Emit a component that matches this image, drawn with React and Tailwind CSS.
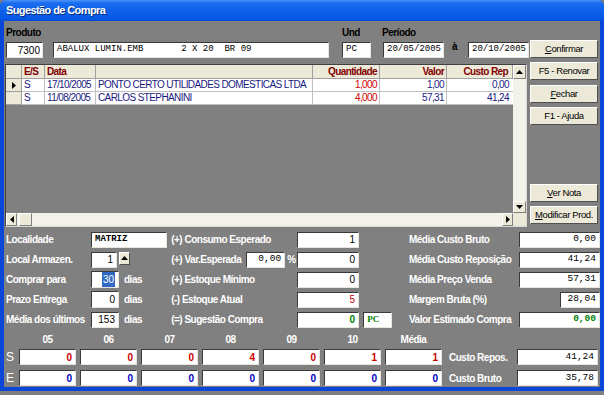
import React from 'react'

const sans = "font-['Liberation_Sans',Arial,sans-serif]"
const mono = "font-['Liberation_Mono','Courier_New',monospace]"

const Box = ({ className = '', children }) => (
  <div className={`bg-white border border-t-[#3a3a3a] border-l-[#3a3a3a] border-b-[#e8e6dc] border-r-[#e8e6dc] flex items-center overflow-hidden whitespace-nowrap ${className}`}>
    {children}
  </div>
)

const Btn = ({ children, className = '' }) => (
  <div className={`h-[18px] w-[68px] bg-[#ece9d8] border border-t-white border-l-white border-b-[#505050] border-r-[#505050] flex items-center justify-center text-[9.5px] tracking-[-0.4px] text-black whitespace-nowrap ${sans} ${className}`}>
    {children}
  </div>
)

const Tri = ({ dir }) => {
  const pts = { up: '0,4 3.5,0 7,4', down: '0,0 3.5,4 7,0', left: '4,0 0,3.5 4,7', right: '0,0 4,3.5 0,7' }[dir]
  const w = dir === 'up' || dir === 'down' ? 7 : 4
  const h = dir === 'up' || dir === 'down' ? 4 : 7
  return (
    <svg width={w} height={h} viewBox={`0 0 ${w} ${h}`}>
      <polygon points={pts} fill="#000" />
    </svg>
  )
}

const rows = [
  { es: 'S', data: '17/10/2005', nome: 'PONTO CERTO UTILIDADES DOMESTICAS LTDA', qt: '1,000', valor: '1,00', custo: '0,00', sel: true },
  { es: 'S', data: '11/08/2005', nome: 'CARLOS STEPHANINI', qt: '4,000', valor: '57,31', custo: '41,24' },
]

const Label = ({ children, className = '' }) => (
  <div className={`text-[10px] tracking-[-0.5px] font-bold text-white whitespace-nowrap ${sans} ${className}`}>{children}</div>
)

const hd = 'bg-[#ece9d8] border-r border-b border-t-white border-l-white border-r-[#a0a0a0] border-b-[#a0a0a0] leading-[13px]'
const cell = 'bg-white border-r border-b border-[#c0c0c0]'

const Grid = () => (
  <div className="w-[522px] h-[163px] border border-t-[#404040] border-l-[#404040] border-b-[#d8d8d8] border-r-[#d8d8d8] flex flex-col">
    <div className="flex flex-1 min-h-0">
      <div className="w-[507px] flex flex-col">
        <div className={`h-[14px] flex text-[10px] tracking-[-0.6px] font-bold text-[#800000] ${sans}`}>
          <div className={`w-[16px] ${hd}`}></div>
          <div className={`w-[23px] pl-[2px] ${hd}`}>E/S</div>
          <div className={`w-[51px] pl-[2px] ${hd}`}>Data</div>
          <div className={`w-[217px] ${hd}`}></div>
          <div className={`w-[67px] pr-[2px] text-right ${hd}`}>Quantidade</div>
          <div className={`w-[67px] pr-[2px] text-right ${hd}`}>Valor</div>
          <div className={`w-[66px] pr-[4px] text-right ${hd}`}>Custo Rep</div>
        </div>
        {rows.map((r, i) => (
          <div key={i} className={`h-[13px] flex text-[10px] tracking-[-0.6px] text-[#1a1a80] leading-[12px] ${sans}`}>
            <div className="w-[16px] bg-[#ece9d8] border-r border-b border-[#a0a0a0] flex items-center justify-center">
              {r.sel && <Tri dir="right" />}
            </div>
            <div className={`w-[23px] pl-[2px] ${cell}`}>{r.es}</div>
            <div className={`w-[51px] pl-[2px] ${cell}`}>{r.data}</div>
            <div className={`w-[217px] pl-[2px] whitespace-nowrap overflow-hidden ${cell}`}>{r.nome}</div>
            <div className={`w-[67px] pr-[2px] text-right text-[#d00000] ${cell}`}>{r.qt}</div>
            <div className={`w-[67px] pr-[2px] text-right ${cell}`}>{r.valor}</div>
            <div className="w-[66px] bg-white border-b border-[#c0c0c0] pr-[4px] text-right">{r.custo}</div>
          </div>
        ))}
      </div>
      <div className="w-[13px] bg-[#f3f2ea] flex flex-col justify-between">
        <div className="h-[14px] bg-[#ece9d8] border border-t-white border-l-white border-b-[#808080] border-r-[#808080] flex items-center justify-center">
          <Tri dir="up" />
        </div>
        <div className="h-[12px] bg-[#ece9d8] border border-t-white border-l-white border-b-[#808080] border-r-[#808080] flex items-center justify-center">
          <Tri dir="down" />
        </div>
      </div>
    </div>
    <div className="h-[13px] flex bg-[#f3f2ea]">
      <div className="w-[11px] bg-[#ece9d8] border border-t-white border-l-white border-b-[#808080] border-r-[#808080] flex items-center justify-center">
        <Tri dir="left" />
      </div>
      <div className="w-[13px] ml-[2px] bg-[#ece9d8] border border-t-white border-l-white border-b-[#808080] border-r-[#808080]"></div>
      <div className="flex-1"></div>
      <div className="w-[11px] bg-[#ece9d8] border border-t-white border-l-white border-b-[#808080] border-r-[#808080] flex items-center justify-center">
        <Tri dir="right" />
      </div>
      <div className="w-[13px] bg-[#ece9d8]"></div>
    </div>
  </div>
)

const numCls = `text-[10px] ${sans} justify-end pr-[3px]`
const monoVal = `text-[9.5px] ${mono} justify-end pr-[3px] text-black`

const Seg1 = ({ label, children }) => (
  <div className="w-[168px] flex items-center pl-[2px]">
    <Label className="w-[85px]">{label}</Label>
    {children}
  </div>
)

const Seg3 = ({ label, children }) => (
  <div className="w-[192px] flex items-center">
    <Label className="w-[110px]">{label}</Label>
    <div className="w-[81px] flex justify-end">{children}</div>
  </div>
)

const Dias = () => <Label className="ml-[5px]">dias</Label>

const months = ['05', '06', '07', '08', '09', '10', 'Média']
const sVals = ['0', '0', '0', '4', '0', '1', '1']
const eVals = ['0', '0', '0', '0', '0', '0', '0']

export default function App() {
  return (
    <div className="w-[604px] h-[395px] bg-[#7f7f7f] overflow-hidden">
      <div className="h-[391px] flex flex-col bg-[#0a46d8] rounded-t-[6px]">
        <div className="h-[21px] flex items-center pl-[6px] rounded-t-[6px] bg-[linear-gradient(to_bottom,#4a94f8_0%,#1c6ef0_14%,#0c60ea_50%,#0659e6_85%,#034bd6_100%)]">
          <span className={`text-white font-bold text-[11px] tracking-[-0.6px] [text-shadow:1px_1px_#0b2a7a] ${sans}`}>Sugestão de Compra</span>
        </div>
        <div className="flex-1 mx-[4px] mb-[4px] bg-[#808080] flex flex-col">
          <div className="flex">
            <div className="w-[526px] flex flex-col">
              <div className={`mt-[6px] h-[11px] flex text-[10px] tracking-[-0.5px] leading-[11px] font-bold text-black ${sans}`}>
                <div className="w-[338px] pl-[2px]">Produto</div>
                <div className="w-[40px]">Und</div>
                <div>Período</div>
              </div>
              <div className="mt-[4px] h-[16px] flex items-stretch pl-[2px]">
                <Box className={`w-[37px] justify-end pr-[2px] text-[10px] ${sans}`}>7300</Box>
                <Box className={`w-[276px] ml-[10px] pl-[3px] text-[9px] whitespace-pre ${mono}`}>ABALUX LUMIN.EMB       2 X 20  BR 09</Box>
                <Box className={`w-[29px] ml-[13px] pl-[3px] text-[9px] ${mono}`}>PC</Box>
                <Box className={`w-[61px] ml-[12px] pl-[3px] text-[9px] ${mono}`}>20/05/2005</Box>
                <div className={`w-[24px] pl-[8px] text-[10px] font-bold leading-[10px] ${sans}`}>à</div>
                <Box className={`w-[61px] pl-[3px] text-[9px] ${mono}`}>20/10/2005</Box>
              </div>
              <div className="mt-[6px] pl-[1px]">
                <Grid />
              </div>
            </div>
            <div className="w-[68px] flex flex-col">
              <Btn className="mt-[19px]"><span><span className="underline">C</span>onfirmar</span></Btn>
              <Btn className="mt-[4px]">F5 - Renovar</Btn>
              <Btn className="mt-[5px]"><span><span className="underline">F</span>echar</span></Btn>
              <Btn className="mt-[4px]">F1 - Ajuda</Btn>
              <Btn className="mt-[59px]"><span><span className="underline">V</span>er Nota</span></Btn>
              <Btn className="mt-[4px]"><span><span className="underline">M</span>odificar Prod.</span></Btn>
            </div>
          </div>

          <div className="mt-[4px] flex flex-col gap-[3px]">
            <div className="h-[17px] flex items-center">
              <Seg1 label="Localidade">
                <Box className={`w-[76px] h-[16px] pl-[3px] text-[9px] font-bold ${mono}`}>MATRIZ</Box>
              </Seg1>
              <div className="w-[239px] flex items-center">
                <Label className="w-[126px]">(+) Consumo Esperado</Label>
                <Box className={`w-[62px] h-[16px] ${numCls}`}>1</Box>
              </div>
              <Seg3 label="Média Custo Bruto">
                <Box className={`w-[81px] h-[16px] ${monoVal}`}>0,00</Box>
              </Seg3>
            </div>

            <div className="h-[17px] flex items-center">
              <Seg1 label="Local Armazen.">
                <Box className={`w-[26px] h-[16px] ${numCls}`}>1</Box>
                <div className="ml-[2px] w-[11px] h-[13px] bg-[#ece9d8] border border-t-white border-l-white border-b-[#505050] border-r-[#505050] flex items-center justify-center self-start">
                  <Tri dir="up" />
                </div>
              </Seg1>
              <div className="w-[239px] flex items-center">
                <Label className="w-[75px]">(+) Var.Esperada</Label>
                <Box className={`w-[39px] h-[16px] ${monoVal}`}>0,00</Box>
                <Label className="w-[12px] pl-[2px] text-[9px]">%</Label>
                <Box className={`w-[62px] h-[16px] ${numCls}`}>0</Box>
              </div>
              <Seg3 label="Média Custo Reposição">
                <Box className={`w-[81px] h-[16px] ${monoVal}`}>41,24</Box>
              </Seg3>
            </div>

            <div className="h-[17px] flex items-center">
              <Seg1 label="Comprar para">
                <Box className={`w-[28px] h-[17px] ${numCls}`}>
                  <span className="bg-[#316ac5] text-white px-[1px]">30</span>
                </Box>
                <Dias />
              </Seg1>
              <div className="w-[239px] flex items-center">
                <Label className="w-[126px]">(+) Estoque Mínimo</Label>
                <Box className={`w-[62px] h-[16px] ${numCls}`}>0</Box>
              </div>
              <Seg3 label="Média Preço Venda">
                <Box className={`w-[81px] h-[16px] ${monoVal}`}>57,31</Box>
              </Seg3>
            </div>

            <div className="h-[17px] flex items-center">
              <Seg1 label="Prazo Entrega">
                <Box className={`w-[28px] h-[17px] ${numCls}`}>0</Box>
                <Dias />
              </Seg1>
              <div className="w-[239px] flex items-center">
                <Label className="w-[126px]">(-) Estoque Atual</Label>
                <Box className={`w-[62px] h-[16px] text-[#d00000] ${numCls}`}>5</Box>
              </div>
              <Seg3 label="Margem Bruta (%)">
                <Box className={`w-[40px] h-[16px] ${monoVal}`}>28,04</Box>
              </Seg3>
            </div>

            <div className="h-[17px] flex items-center">
              <Seg1 label="Média dos últimos">
                <Box className={`w-[28px] h-[16px] ${numCls}`}>153</Box>
                <Dias />
              </Seg1>
              <div className="w-[239px] flex items-center">
                <Label className="w-[126px]">(=) Sugestão Compra</Label>
                <Box className={`w-[62px] h-[16px] text-[#008000] font-bold ${numCls}`}>0</Box>
                <Box className={`w-[29px] h-[16px] ml-[4px] pl-[3px] text-[9px] font-bold text-[#008000] font-['Liberation_Serif',serif]`}>PC</Box>
              </div>
              <Seg3 label="Valor Estimado Compra">
                <Box className={`w-[81px] h-[16px] font-bold text-[#008000] text-[9.5px] ${mono} justify-end pr-[3px]`}>0,00</Box>
              </Seg3>
            </div>
          </div>

          <div className="mt-[1px] h-[20px] flex items-center pl-[15px]">
            <div className="flex gap-[4px]">
              {months.map((m) => (
                <Label key={m} className="w-[57px] text-center">{m}</Label>
              ))}
            </div>
          </div>

          <div className="h-[16px] flex items-center">
            <Label className="w-[15px] pl-[2px] font-normal text-[12px]">S</Label>
            <div className="flex gap-[4px]">
              {sVals.map((v, i) => (
                <Box key={i} className={`w-[57px] h-[16px] font-bold text-[#cc0000] ${numCls}`}>{v}</Box>
              ))}
            </div>
            <Label className="w-[68px] ml-[7px]">Custo Repos.</Label>
            <Box className={`w-[81px] h-[16px] ${monoVal}`}>41,24</Box>
          </div>

          <div className="mt-[5px] h-[16px] flex items-center">
            <Label className="w-[15px] pl-[2px] font-normal text-[12px]">E</Label>
            <div className="flex gap-[4px]">
              {eVals.map((v, i) => (
                <Box key={i} className={`w-[57px] h-[16px] font-bold text-[#0000c0] ${numCls}`}>{v}</Box>
              ))}
            </div>
            <Label className="w-[68px] ml-[7px]">Custo Bruto</Label>
            <Box className={`w-[81px] h-[16px] ${monoVal}`}>35,78</Box>
          </div>
        </div>
      </div>
    </div>
  )
}
